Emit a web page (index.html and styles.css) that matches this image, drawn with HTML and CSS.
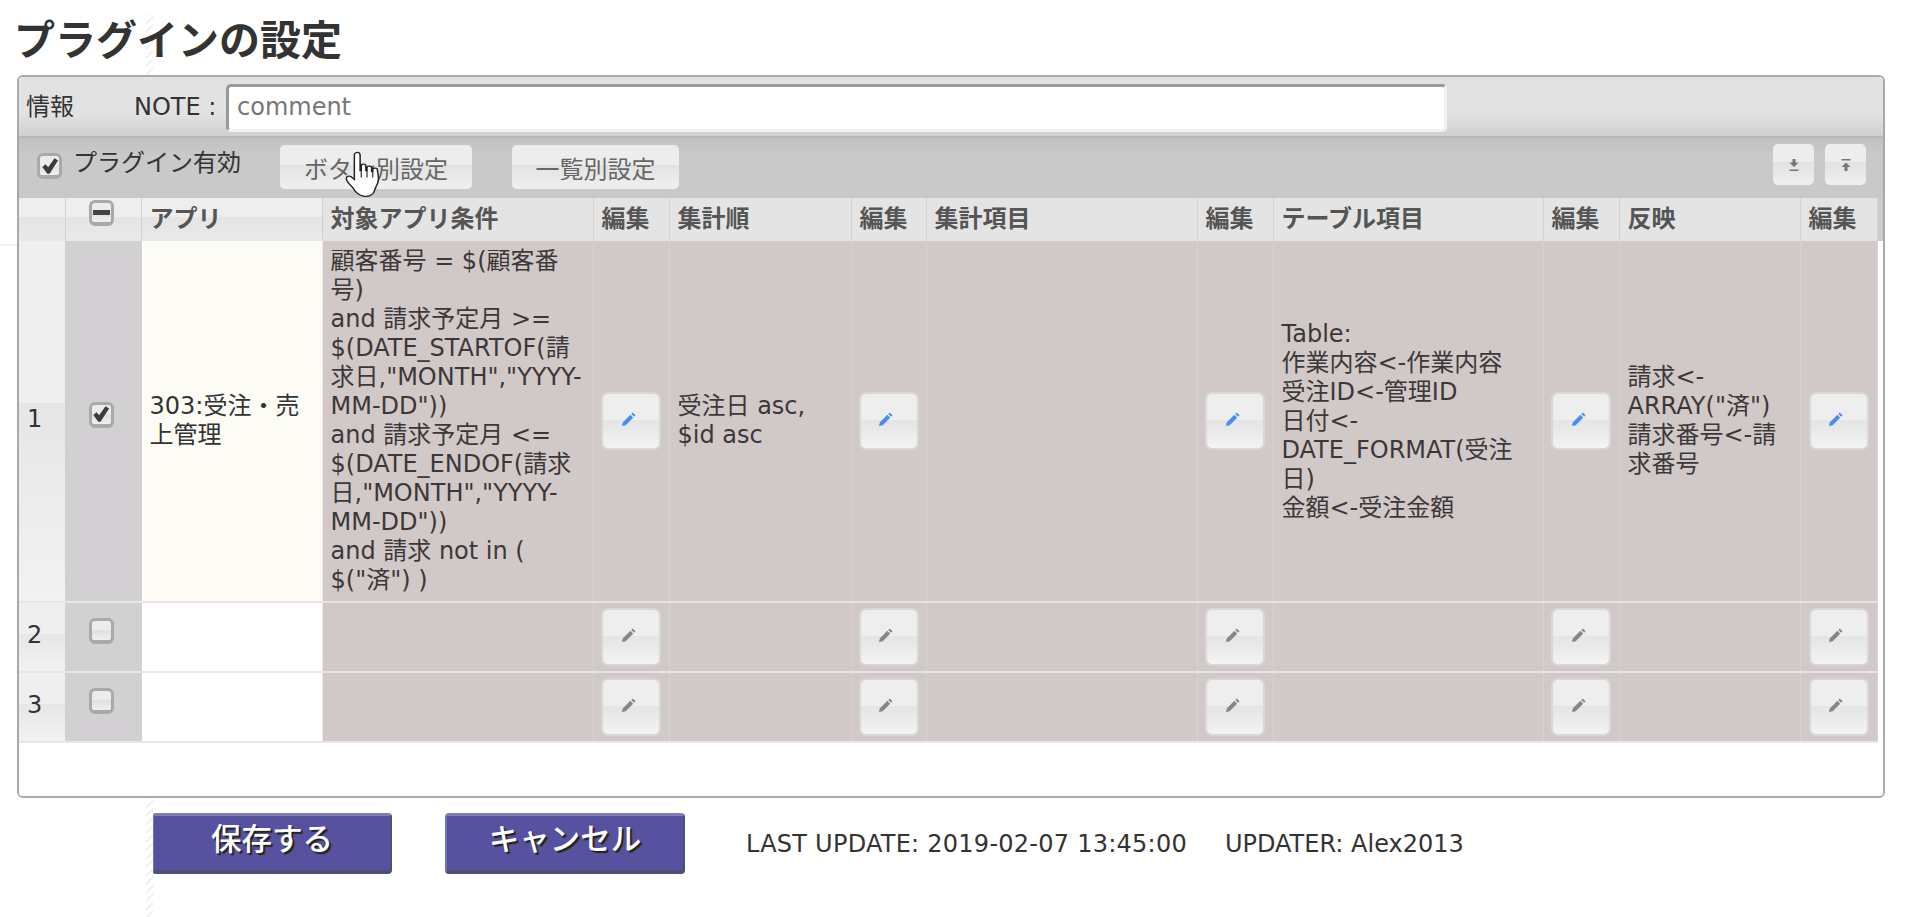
FILE: index.html
```html
<!DOCTYPE html>
<html lang="ja">
<head>
<meta charset="utf-8">
<title>プラグインの設定</title>
<link rel="stylesheet" href="styles.css">
</head>
<body>
<div class="hatch hatch-top"></div>
<div class="hatch hatch-bottom"></div>
<div class="side-line"></div>
<h1 class="page-title">プラグインの設定</h1>
<section class="panel">
  <div class="info-bar">
    <span class="info-label">情報</span>
    <label class="note-label">NOTE :</label>
    <div class="note-input">comment</div>
  </div>
  <div class="tool-bar">
    <span class="check check-on tool-check"><svg viewBox="0 0 20 20"><path d="M1.500 11l3.500-3 3 3.500L15 1.500l4 2.500-9.500 14.500H7z"/></svg></span>
    <span class="tool-label">プラグイン有効</span>
    <button class="tool-btn tool-btn-a" type="button">ボタン別設定</button>
    <button class="tool-btn tool-btn-b" type="button">一覧別設定</button>
    <span class="tool-spacer"></span>
    <button class="mini-btn" type="button"><svg viewBox="0 0 12 14"><path d="M4.500 1h3v3.500h3L6 9 1.500 4.500h3zM1.500 11.500h9V13h-9z"/></svg></button>
    <button class="mini-btn" type="button"><svg viewBox="0 0 12 14"><path d="M1.500 1h9v1.500h-9zM6 4.500L10.500 9h-3v4h-3V9h-3z"/></svg></button>
    <svg class="hand" viewBox="0 0 40 48" preserveAspectRatio="none"><path d="M10 2c2-1.500 4 0 4 2v16l1 0V15c0-2 4-2 4 0v5h1v-3c0-2 4-2 4 0v4h1v-2c0-2 4-2 4 0 1 8 2 11-1 17l-2 6c-1 3-5 5-9 4-5-1-7-4-9-8-3-4-6-7-6-10 0-2 2-3 4-2l3 3V4c0-1 0-1.500 1-2z" fill="#fff" stroke="#222" stroke-width="1.300"/><path d="M15 20v7M20 20v7M25 21v6" stroke="#222" fill="none"/></svg>
  </div>
  <div class="table-wrap">
    <table class="grid">
      <colgroup>
        <col class="c-n"><col class="c-e"><col class="c-s"><col class="c-l"><col class="c-e"><col class="c-m"><col class="c-t"><col class="c-l"><col class="c-e"><col class="c-k"><col class="c-e"><col class="c-r"><col class="c-z">
      </colgroup>
      <thead>
        <tr>
          <th class="th-num"></th>
          <th class="th-check"><span class="check check-minus"><i></i></span></th>
          <th class="th-gloss">アプリ</th>
          <th>対象アプリ条件</th>
          <th>編集</th>
          <th>集計順</th>
          <th>編集</th>
          <th>集計項目</th>
          <th>編集</th>
          <th>テーブル項目</th>
          <th>編集</th>
          <th>反映</th>
          <th>編集</th>
        </tr>
      </thead>
      <tbody>
        <tr class="row-main">
          <td class="td-num">1</td>
          <td class="td-check"><span class="check check-on"><svg viewBox="0 0 20 20"><path d="M1.500 11l3.500-3 3 3.500L15 1.500l4 2.500-9.500 14.500H7z"/></svg></span></td>
          <td class="td-app">303:受注・売<br>上管理</td>
          <td class="td-text">顧客番号 = $(顧客番<br>号)<br>and 請求予定月 &gt;=<br>$(DATE_STARTOF(請<br>求日,"MONTH","YYYY-<br>MM-DD"))<br>and 請求予定月 &lt;=<br>$(DATE_ENDOF(請求<br>日,"MONTH","YYYY-<br>MM-DD"))<br>and 請求 not in (<br>$("済") )</td>
          <td class="td-btn"><button class="edit-btn edit-on" type="button"><svg viewBox="0 0 16 16"><path d="M1 15l1-4 8-8 3 3-8 8zM11 2l1.500-1.500 3 3L14 5z"/></svg></button></td>
          <td class="td-text">受注日 asc,<br>$id asc</td>
          <td class="td-btn"><button class="edit-btn edit-on" type="button"><svg viewBox="0 0 16 16"><path d="M1 15l1-4 8-8 3 3-8 8zM11 2l1.500-1.500 3 3L14 5z"/></svg></button></td>
          <td class="td-text"></td>
          <td class="td-btn"><button class="edit-btn edit-on" type="button"><svg viewBox="0 0 16 16"><path d="M1 15l1-4 8-8 3 3-8 8zM11 2l1.500-1.500 3 3L14 5z"/></svg></button></td>
          <td class="td-text">Table:<br>作業内容&lt;-作業内容<br>受注ID&lt;-管理ID<br>日付&lt;-<br>DATE_FORMAT(受注<br>日)<br>金額&lt;-受注金額</td>
          <td class="td-btn"><button class="edit-btn edit-on" type="button"><svg viewBox="0 0 16 16"><path d="M1 15l1-4 8-8 3 3-8 8zM11 2l1.500-1.500 3 3L14 5z"/></svg></button></td>
          <td class="td-text">請求&lt;-<br>ARRAY("済")<br>請求番号&lt;-請<br>求番号</td>
          <td class="td-btn"><button class="edit-btn edit-on" type="button"><svg viewBox="0 0 16 16"><path d="M1 15l1-4 8-8 3 3-8 8zM11 2l1.500-1.500 3 3L14 5z"/></svg></button></td>
        </tr>
        <tr class="row-empty">
          <td class="td-num">2</td>
          <td class="td-check"><span class="check"></span></td>
          <td class="td-blank"></td>
          <td class="td-text"></td>
          <td class="td-btn"><button class="edit-btn" type="button"><svg viewBox="0 0 16 16"><path d="M1 15l1-4 8-8 3 3-8 8zM11 2l1.500-1.500 3 3L14 5z"/></svg></button></td>
          <td class="td-text"></td>
          <td class="td-btn"><button class="edit-btn" type="button"><svg viewBox="0 0 16 16"><path d="M1 15l1-4 8-8 3 3-8 8zM11 2l1.500-1.500 3 3L14 5z"/></svg></button></td>
          <td class="td-text"></td>
          <td class="td-btn"><button class="edit-btn" type="button"><svg viewBox="0 0 16 16"><path d="M1 15l1-4 8-8 3 3-8 8zM11 2l1.500-1.500 3 3L14 5z"/></svg></button></td>
          <td class="td-text"></td>
          <td class="td-btn"><button class="edit-btn" type="button"><svg viewBox="0 0 16 16"><path d="M1 15l1-4 8-8 3 3-8 8zM11 2l1.500-1.500 3 3L14 5z"/></svg></button></td>
          <td class="td-text"></td>
          <td class="td-btn"><button class="edit-btn" type="button"><svg viewBox="0 0 16 16"><path d="M1 15l1-4 8-8 3 3-8 8zM11 2l1.500-1.500 3 3L14 5z"/></svg></button></td>
        </tr>
        <tr class="row-empty">
          <td class="td-num">3</td>
          <td class="td-check"><span class="check"></span></td>
          <td class="td-blank"></td>
          <td class="td-text"></td>
          <td class="td-btn"><button class="edit-btn" type="button"><svg viewBox="0 0 16 16"><path d="M1 15l1-4 8-8 3 3-8 8zM11 2l1.500-1.500 3 3L14 5z"/></svg></button></td>
          <td class="td-text"></td>
          <td class="td-btn"><button class="edit-btn" type="button"><svg viewBox="0 0 16 16"><path d="M1 15l1-4 8-8 3 3-8 8zM11 2l1.500-1.500 3 3L14 5z"/></svg></button></td>
          <td class="td-text"></td>
          <td class="td-btn"><button class="edit-btn" type="button"><svg viewBox="0 0 16 16"><path d="M1 15l1-4 8-8 3 3-8 8zM11 2l1.500-1.500 3 3L14 5z"/></svg></button></td>
          <td class="td-text"></td>
          <td class="td-btn"><button class="edit-btn" type="button"><svg viewBox="0 0 16 16"><path d="M1 15l1-4 8-8 3 3-8 8zM11 2l1.500-1.500 3 3L14 5z"/></svg></button></td>
          <td class="td-text"></td>
          <td class="td-btn"><button class="edit-btn" type="button"><svg viewBox="0 0 16 16"><path d="M1 15l1-4 8-8 3 3-8 8zM11 2l1.500-1.500 3 3L14 5z"/></svg></button></td>
        </tr>
      </tbody>
    </table>
  </div>
</section>
<footer class="actions">
  <button class="action-btn" type="button">保存する</button>
  <button class="action-btn" type="button">キャンセル</button>
  <p class="meta"><span class="meta-date">LAST UPDATE: 2019-02-07 13:45:00</span><span>UPDATER: Alex2013</span></p>
</footer>
</body>
</html>
```
FILE: styles.css
```css
* { box-sizing: border-box; }
html, body { margin: 0; height: 100%; overflow: hidden; background: #fff; }
body {
  position: relative;
  padding: 0 17px;
  color: #333;
  font: 24px/29px "DejaVu Sans", "Noto Sans CJK JP", sans-serif;
}
.hatch {
  position: absolute;
  left: 146px;
  width: 7px;
  background: repeating-linear-gradient(135deg, #f1f1f1 0 2px, #fff 2px 6px);
}
.hatch-top { top: 14px; height: 61px; }
.hatch-bottom { top: 798px; height: 119px; }
.side-line { position: absolute; left: 0; top: 244px; width: 17px; height: 2px; background: #f1f1f1; }
.page-title {
  position: relative;
  height: 75px;
  margin: 0 0 0 -3px;
  padding-top: 20px;
  font-size: 41px;
  line-height: 42px;
  font-weight: 700;
  color: #333;
}
.panel {
  position: relative;
  width: 1868px;
  border: 2px solid #a9a9a9;
  border-radius: 6px;
  background: #fff;
  overflow: hidden;
}
.info-bar {
  display: flex;
  align-items: center;
  height: 61px;
  padding: 7px 0 4px 7px;
  border-bottom: 2px solid #b9b9b9;
  background: linear-gradient(#e2e2e2 0 62%, #d0d0d0);
}
.info-label { width: 108px; margin-bottom: 2px; }
.note-label { width: 92px; margin-bottom: 2px; white-space: nowrap; }
.note-input {
  width: 1221px;
  height: 48px;
  padding-left: 8px;
  border: 3px solid #f1f1f1;
  border-top-color: #999;
  border-left-color: #999;
  border-radius: 5px;
  background: #fff;
  color: #777;
  line-height: 41px;
}
.tool-bar {
  position: relative;
  display: flex;
  align-items: flex-start;
  height: 60px;
  padding: 7px 17px 0 18px;
  background: linear-gradient(#c2c2c2, #c9c9c9 30%);
}
.check {
  display: inline-flex;
  align-items: center;
  justify-content: center;
  width: 25px;
  height: 26px;
  border: 3px solid #a9a9a9;
  border-bottom-width: 4px;
  border-radius: 6px;
  background: linear-gradient(#ececec 50%, #e0e0e0 50%, #f0f0f0);
  vertical-align: top;
}
.check svg { flex: none; width: 18px; height: 18px; fill: #3c3c3c; }
.check-minus i { display: block; flex: none; width: 17px; height: 5px; background: #444; }
.tool-check { flex: none; margin-top: 8px; }
.tool-label { flex: none; width: 166px; margin: 4px 41px 0 11px; white-space: nowrap; }
.tool-btn {
  flex: none;
  width: 192px;
  height: 44px;
  padding: 6px 0 0;
  border: 0;
  border-radius: 5px;
  background: linear-gradient(#ededed 0 45%, #e2e2e2 45%, #f0f0f0);
  color: #666;
  font: inherit;
}
.tool-btn-b { width: 167px; margin-left: 40px; }
.tool-spacer { flex: 1; }
.mini-btn {
  display: flex;
  flex: none;
  align-items: center;
  justify-content: center;
  width: 41px;
  height: 41px;
  margin: -1px 0 0 11px;
  padding: 0;
  border: 0;
  border-radius: 5px;
  background: linear-gradient(#ededed 0 45%, #e2e2e2 45%, #f0f0f0);
}
.mini-btn svg { width: 12px; height: 14px; fill: #777; }
.hand { position: absolute; left: 325px; top: 13px; width: 46px; height: 47px; }
.table-wrap {
  padding-bottom: 53px;
  background: linear-gradient(#cdcdcd 0 43px, #fff 43px);
}
.grid {
  width: 1858px;
  table-layout: fixed;
  border-collapse: collapse;
}
.c-n { width: 46px; }
.c-e { width: 76px; }
.c-s { width: 181px; }
.c-l { width: 271px; }
.c-k { width: 270px; }
.c-m { width: 182px; }
.c-r { width: 181px; }
.c-t { width: 75px; }
.c-z { width: 77px; }
.grid th {
  height: 43px;
  padding: 0 8px;
  border: 1px solid #d2d2d2;
  border-width: 0 1px;
  background: #e4e4e4;
  color: #555;
  font-weight: 700;
  text-align: left;
  white-space: nowrap;
}
.grid th:first-child { border-left: 0; }
.grid .th-num, .grid .th-check, .grid .th-gloss { background: linear-gradient(#eeeeee 0 45%, #e4e4e4 45%, #e9e9e9); }
.grid .th-check { padding: 0 0 10px 23px; }
.grid td {
  padding: 6px 8px;
  border: solid #dad6d6;
  border-width: 2px 1px 0;
  vertical-align: middle;
  white-space: nowrap;
}
.grid tbody tr:first-child td { border-top: 0; }
.grid tbody tr:last-child td { border-bottom: 2px solid #e8e6e6; }
.row-main { height: 359px; }
.row-empty { height: 70px; }
.grid .td-num {
  padding-bottom: 10px;
  border: solid #e6e6e6;
  border-width: 2px 0 0;
  background: linear-gradient(#efefef 0 45%, #e6e6e6 45%, #f2f2f2);
}
.grid tbody tr:first-child .td-num { border-top: 0; }
.grid .td-check {
  padding: 0 0 10px 23px;
  border-color: #e6e6e6 #d2d0d2;
  background: #d2d0d2;
}
.grid .td-app { background: linear-gradient(#fcfcf3, #fdfbf4); border-color: #f1efe8; }
.grid .td-blank { background: #fff; border-color: #e8e8e8; }
.grid .td-text { background: #d1c9c8; border-color: #e6e4e4 #d8d3d2; color: #3c3838; }
.grid .td-btn { padding: 0; background: #d1c9c8; border-color: #e6e4e4 #d8d3d2; text-align: center; }
.edit-btn {
  display: inline-flex;
  align-items: center;
  justify-content: center;
  width: 60px;
  height: 58px;
  padding: 0 6px 3px 0;
  border: 2px solid #d8d6d6;
  border-radius: 7px;
  background: linear-gradient(#eeeeee 0 48%, #e4e4e4 48%, #f3f3f3);
  vertical-align: middle;
}
.edit-btn svg { width: 15px; height: 15px; fill: #868686; }
.edit-on svg { fill: #4a8df0; }
.actions {
  display: flex;
  align-items: flex-start;
  padding: 15px 0 0 135px;
}
.action-btn {
  width: 240px;
  height: 61px;
  margin-right: 53px;
  padding: 0 0 6px;
  border: solid #57529f;
  border-width: 3px 2px 4px;
  border-top-color: #7d7dba;
  border-bottom-color: #4c5173;
  border-right-color: #4c5173;
  border-left-color: #7274b4;
  border-radius: 4px;
  background: #57529f;
  color: #fff;
  font: 500 30.5px/40px "DejaVu Sans", "Noto Sans CJK JP", sans-serif;
  text-shadow: 2px 2px 1px #222;
}
.meta {
  display: flex;
  gap: 38px;
  margin: 17px 0 0 8px;
  color: #333;
}
.meta-date { letter-spacing: .25px; }
```
